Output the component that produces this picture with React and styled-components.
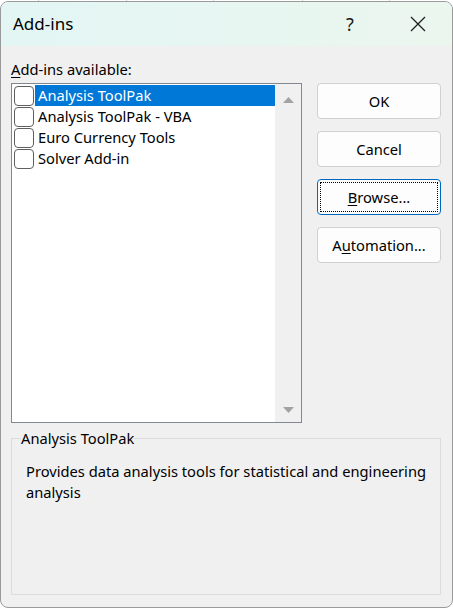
import React from "react";
import styled, { createGlobalStyle } from "styled-components";

const GlobalStyle = createGlobalStyle`
    html, body {
        margin: 0;
        padding: 0;
        background: #fff;
    }
    body {
        font-family: "Noto Sans", "Open Sans", sans-serif;
        font-size: 14.7px;
        color: #000;
    }
    * { box-sizing: border-box; }
`;

const items = [
    { name: "Analysis ToolPak", selected: true },
    { name: "Analysis ToolPak - VBA" },
    { name: "Euro Currency Tools" },
    { name: "Solver Add-in" },
];

function App() {
    return (
        <>
            <GlobalStyle />
            <Desk>
                <Window>
                    <TitleBar>
                        <Title>Add-ins</Title>
                        <TitleButton>?</TitleButton>
                        <TitleButton>
                            <svg width="16" height="16" viewBox="0 0 16 16">
                                <path d="M1 1 L15 15 M15 1 L1 15" stroke="#1a1a1a" strokeWidth="1.2" fill="none" />
                            </svg>
                        </TitleButton>
                    </TitleBar>
                    <Body>
                        <Label><u>A</u>dd-ins available:</Label>
                        <MainRow>
                            <ListBox>
                                <List>
                                    {items.map((it) => (
                                        <Row key={it.name}>
                                            <CheckBox />
                                            <ItemText $selected={it.selected}>{it.name}</ItemText>
                                        </Row>
                                    ))}
                                </List>
                                <ScrollBar>
                                    <Arrow viewBox="0 0 11 6"><path d="M5.5 0 L11 6 L0 6 Z" /></Arrow>
                                    <Arrow viewBox="0 0 11 6"><path d="M0 0 L11 0 L5.5 6 Z" /></Arrow>
                                </ScrollBar>
                            </ListBox>
                            <Buttons>
                                <Button>OK</Button>
                                <Button>Cancel</Button>
                                <Button $focused><Focus><u>B</u>rowse...</Focus></Button>
                                <Button>A<u>u</u>tomation...</Button>
                            </Buttons>
                        </MainRow>
                        <Group>
                            <Legend>Analysis ToolPak</Legend>
                            <Description>Provides data analysis tools for statistical and engineering analysis</Description>
                        </Group>
                    </Body>
                </Window>
            </Desk>
        </>
    );
}
export default App;

const Desk = styled.div`
    width: 453px;
    height: 609px;
    padding-top: 1px;
    background-color: #fff;
    background-image:
        linear-gradient(90deg, transparent 38px, #d4d4d4 38px, #d4d4d4 39px, transparent 39px),
        linear-gradient(90deg, transparent 126px, #d4d4d4 126px, #d4d4d4 127px, transparent 127px),
        linear-gradient(90deg, transparent 213px, #d4d4d4 213px, #d4d4d4 214px, transparent 214px),
        linear-gradient(90deg, transparent 302px, #d4d4d4 302px, #d4d4d4 303px, transparent 303px),
        linear-gradient(90deg, transparent 389px, #d4d4d4 389px, #d4d4d4 390px, transparent 390px);
    background-size: 100% 6px;
    background-repeat: no-repeat;
`;

const Window = styled.div`
    width: 453px;
    height: 607px;
    border: 1px solid #9a9a9a;
    border-radius: 8px;
    overflow: hidden;
    background: #f0f0f0;
    display: flex;
    flex-direction: column;
`;

const TitleBar = styled.div`
    height: 44px;
    flex-shrink: 0;
    display: flex;
    align-items: center;
    padding-left: 12px;
    background: linear-gradient(90deg, #e3f6f4 0%, #e8f6f1 60%, #ebf6ee 100%);
`;

const Title = styled.div`
    flex: 1;
    font-size: 17px;
    padding-bottom: 2px;
`;

const TitleButton = styled.div`
    width: 68px;
    height: 44px;
    display: flex;
    align-items: center;
    justify-content: center;
    font-size: 18px;
    color: #1a1a1a;
`;

const Body = styled.div`
    flex: 1;
    display: flex;
    flex-direction: column;
    padding: 13px 11px 12px 10px;
`;

const Label = styled.div`
    height: 20px;
    line-height: 20px;
    margin-bottom: 4px;
    u { text-decoration-thickness: 1px; text-underline-offset: 2px; }
`;

const MainRow = styled.div`
    display: flex;
    gap: 15px;
`;

const ListBox = styled.div`
    width: 291px;
    height: 340px;
    border: 1px solid #828790;
    background: #fff;
    display: flex;
`;

const List = styled.div`
    flex: 1;
    padding: 1px 0 0 2px;
`;

const Row = styled.div`
    height: 21px;
    display: flex;
    align-items: center;
`;

const CheckBox = styled.span`
    width: 20px;
    height: 20px;
    border: 1px solid #5f5f5f;
    border-radius: 4px;
    background: #fff;
    flex-shrink: 0;
`;

const ItemText = styled.span`
    flex: 1;
    height: 21px;
    line-height: 21px;
    margin-left: 1px;
    padding-left: 3px;
    background: ${(p) => (p.$selected ? "#0078d7" : "transparent")};
    color: ${(p) => (p.$selected ? "#fff" : "#000")};
`;

const ScrollBar = styled.div`
    width: 26px;
    background: #f0f0f0;
    display: flex;
    flex-direction: column;
    justify-content: space-between;
    align-items: center;
    padding: 13px 0 9px;
`;

const Arrow = styled.svg`
    width: 11px;
    height: 6px;
    fill: #a3a3a3;
`;

const Buttons = styled.div`
    display: flex;
    flex-direction: column;
    gap: 12px;
`;

const Button = styled.div`
    width: 124px;
    height: 36px;
    display: flex;
    align-items: center;
    justify-content: center;
    background: #fdfdfd;
    border: 1px solid ${(p) => (p.$focused ? "#0067c0" : "#d0d0d0")};
    border-radius: 4px;
    padding: 2px;
    u { text-decoration-thickness: 1px; text-underline-offset: 2px; }
`;

const Focus = styled.div`
    width: 100%;
    height: 100%;
    border: 1px dotted #000;
    display: flex;
    align-items: center;
    justify-content: center;
`;

const Group = styled.fieldset`
    margin: 6px 0 0 0;
    padding: 0 0 0 14px;
    border: 1px solid #dcdcdc;
    height: 166px;
    min-width: 0;
`;

const Legend = styled.legend`
    padding: 0;
    margin-left: -5px;
    line-height: 18px;
`;

const Description = styled.div`
    margin-top: 14px;
    line-height: 21px;
`;
